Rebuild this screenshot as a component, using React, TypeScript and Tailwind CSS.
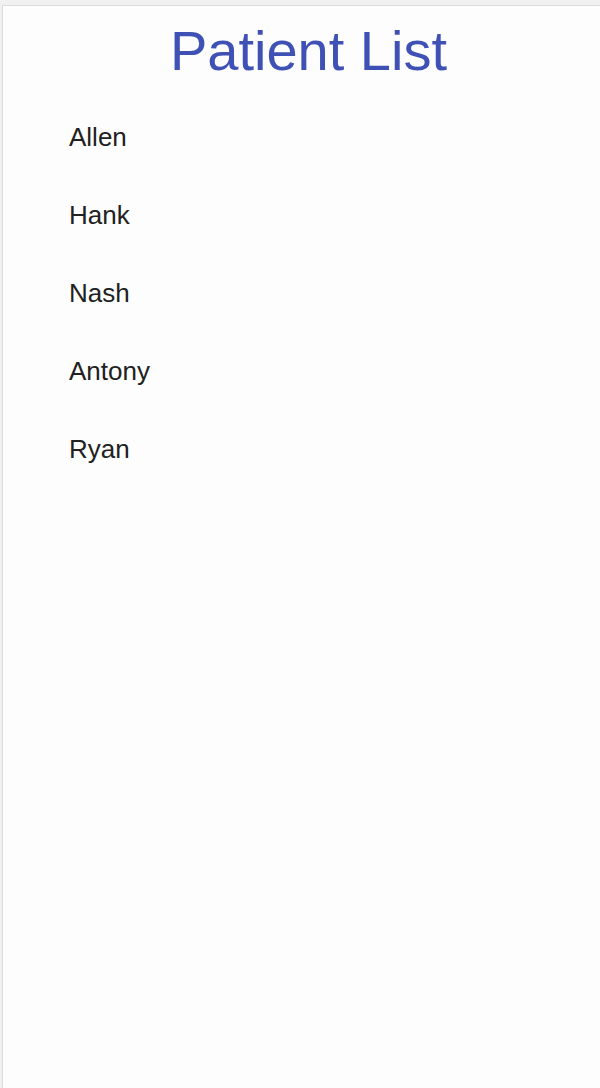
export default function App() {
  const patients = ['Allen', 'Hank', 'Nash', 'Antony', 'Ryan']

  return (
    <div className="h-[1088px] bg-[#f1f1f1] pt-[5px] pl-[2px]" style={{ fontFamily: '"Liberation Sans", Arial, sans-serif' }}>
      <div className="h-full border-t border-l border-[#dcdcdc] bg-[#fdfdfd]">
        {/* Header */}
        <h1 className="text-center pl-[14px] pt-[15px] text-[56px] leading-[60px] text-[#3f51b5]">
          Patient List
        </h1>

        {/* Patients */}
        <ul className="pl-[66px] pt-[41px]">
          {patients.map(name => (
            <li key={name} className="h-[78px] text-[26px] leading-[30px] text-[#212121]">
              {name}
            </li>
          ))}
        </ul>
      </div>
    </div>
  )
}
